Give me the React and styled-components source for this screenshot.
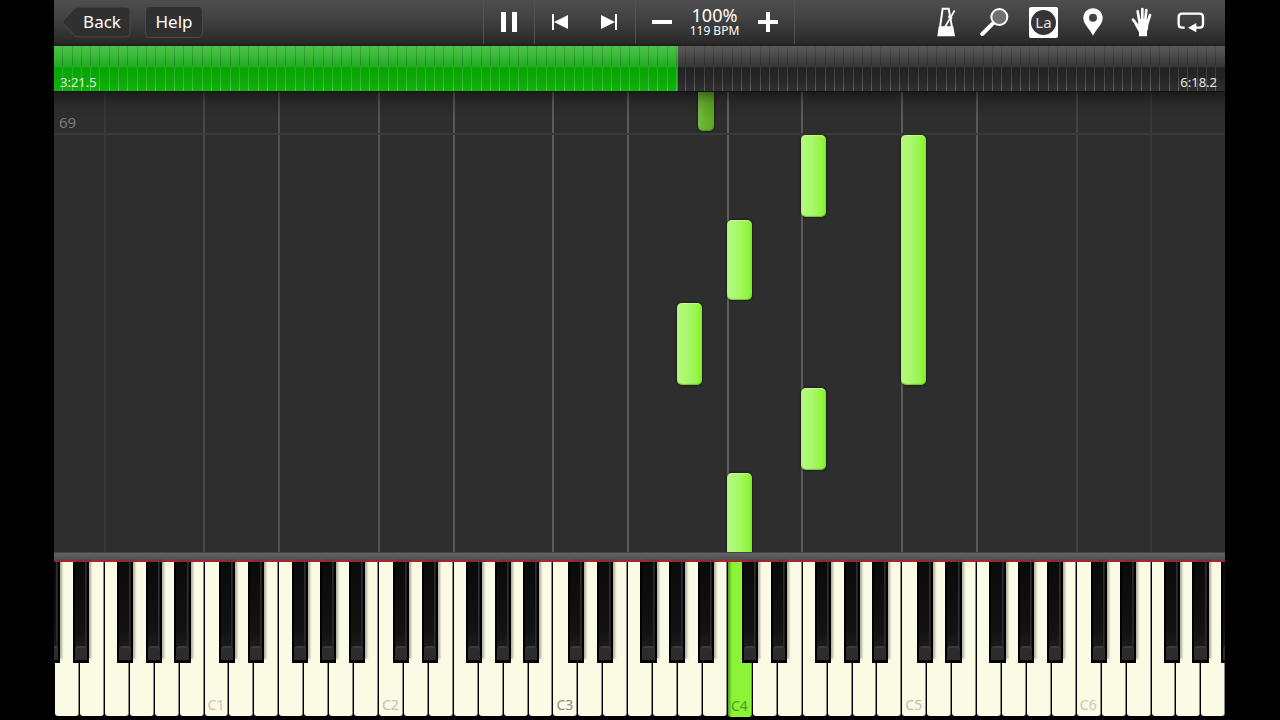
import React from 'react';
import styled, { createGlobalStyle } from 'styled-components';

const KEY_COUNT = 47;
const TICK_COUNT = 126;
const ROLL_HEIGHT = 460;

// distance of each black key from the left edge of its white key, in % of a white key
const SHARPS = { C: 61, D: 77, F: 53, G: 68, A: 83 };
const LETTERS = ['C', 'D', 'E', 'F', 'G', 'A', 'B'];

const KEYS = Array.from({ length: KEY_COUNT }, (_, i) => {
    const step = i + 1;
    return { id: i, letter: LETTERS[step % 7], octave: Math.floor(step / 7) };
});

const LANES = [
    { keys: 2, line: '#2e2e2e' },
    { keys: 4, line: '#383838' },
    { keys: 3, line: '#484848' },
    { keys: 4, line: '#505050' },
    { keys: 3, line: '#545454' },
    { keys: 4, line: '#585858' },
    { keys: 3, line: '#5c5c5c' },
    { keys: 4, line: '#5c5c5c' },
    { keys: 3, line: '#606060' },
    { keys: 4, line: '#5c5c5c' },
    { keys: 3, line: '#5c5c5c' },
    { keys: 4, line: '#585858' },
    { keys: 3, line: '#444444' },
    { keys: 3, line: '#383838' },
];

const NOTES = [
    { id: 1, key: 25.83, top: -30, height: 69, sharp: true },
    { id: 2, key: 30, top: 43, height: 82 },
    { id: 3, key: 34, top: 43, height: 250 },
    { id: 4, key: 27, top: 128, height: 80 },
    { id: 5, key: 25, top: 211, height: 82 },
    { id: 6, key: 30, top: 296, height: 82 },
    { id: 7, key: 27, top: 381, height: 90 },
];

const LABEL_COLORS = { 1: '#c8c7b4', 2: '#c2c1af', 3: '#8f8e80', 4: '#4f9a2c', 5: '#c2c1af', 6: '#c8c7b4' };

const GlobalStyle = createGlobalStyle`
    *{ box-sizing:border-box; }
    body{
        margin:0;
        background:#000;
        font-family:"Noto Sans", "Open Sans", sans-serif;
        color:#fff;
    }
    button{
        margin:0;
        padding:0;
        border:0;
        background:none;
        color:inherit;
        font:inherit;
        cursor:pointer;
    }
`
const Stage = styled.main`
    display:flex;
    flex-direction:column;
    min-height:100vh;
    padding:0 55px 4px 54px;
`
const Toolbar = styled.header`
    display:grid;
    grid-template-columns:1fr auto 1fr;
    height:46px;
    padding:0 2px 2px 0;
    background:linear-gradient(#4e4e4e, #424242 40%, #292929 94%, #1c1c1c);
`
const Nav = styled.nav`
    display:flex;
    align-items:center;
    gap:14px;
    padding-left:7px;
`
const BackButton = styled.button`
    position:relative;
    width:70px;
    height:32px;
    padding-left:12px;
    font-size:17px;
    line-height:32px;
    svg{
        position:absolute;
        inset:0;
    }
    span{ position:relative; }
`
const HelpButton = styled.button`
    width:58px;
    height:32px;
    border:1px solid #4a4a4a;
    border-radius:5px;
    background:#303030;
    font-size:17px;
    line-height:28px;
`
const Transport = styled.div`
    display:flex;
`
const Group = styled.div`
    display:flex;
    align-items:center;
    justify-content:center;
    width:${props => props.$width}px;
    border-left:1px solid #525252;
    &:last-child{ border-right:1px solid #525252; }
`
const IconButton = styled.button`
    display:flex;
    align-items:center;
    justify-content:center;
    width:${props => props.$width || 49}px;
    height:44px;
    svg{ display:block; }
`
const Tempo = styled.div`
    display:flex;
    flex-direction:column;
    align-items:center;
    width:56px;
    padding-bottom:1px;
    white-space:nowrap;
`
const Percent = styled.span`
    font-size:18px;
    line-height:18px;
`
const Bpm = styled.span`
    font-size:12px;
    line-height:13px;
`
const Tools = styled.div`
    display:flex;
    align-items:center;
    justify-content:flex-end;
    padding-right:8px;
`
const NoteNames = styled.span`
    display:flex;
    align-items:center;
    justify-content:center;
    width:29px;
    height:31px;
    border-radius:2px;
    background:#fff;
`
const NoteNamesDisc = styled.span`
    width:25px;
    height:25px;
    border-radius:50%;
    background:#353535;
    color:#e4e4e4;
    font-size:15px;
    line-height:25px;
    text-align:center;
`
const Seek = styled.div`
    position:relative;
    height:46px;
    border-bottom:1px solid #141414;
    background:linear-gradient(#5a5a5a, #4c4c4c 20%, #363636 46%, #222 48%, #252525 70%, #303030);
`
const Played = styled.div`
    height:100%;
    background:linear-gradient(#4cc44a, #38b836 25%, #22ac20 45%, #08a404 50%, #0cac08 80%, #10b40c);
`
const Ticks = styled.div`
    position:absolute;
    inset:0;
    display:flex;
`
const Tick = styled.i`
    flex:1;
    border-right:1px solid;
    border-image:linear-gradient(rgba(0,0,0,0.1), rgba(0,0,0,0.22) 40%, rgba(255,255,255,0.1) 50%, rgba(255,255,255,0.24)) 1;
    &:last-child{ border-right:0; }
`
const Times = styled.div`
    position:absolute;
    inset:auto 8px 1px 6px;
    display:flex;
    justify-content:space-between;
    color:#e8e8e8;
    font-size:13px;
    line-height:15px;
`
const SeekInput = styled.input`
    position:absolute;
    inset:0;
    width:100%;
    margin:0;
    opacity:0;
`
const Roll = styled.section`
    position:relative;
    display:flex;
    flex:1;
    min-height:${ROLL_HEIGHT}px;
    overflow:hidden;
    background:#2e2e2e;
`
const Lane = styled.div`
    flex:${props => props.$keys} 1 0;
    border-left:2px solid ${props => props.$line};
    min-width:0;
    padding:0;
    box-sizing:border-box;
`
const Lanes = styled.div`
    display:grid;
    flex:1;
    grid-template-columns:${LANES.map(lane => `${lane.keys}fr`).join(' ')};
`
const Measure = styled.div`
    position:absolute;
    inset:0 0 auto;
    height:43px;
    padding:21px 0 0 5px;
    border-bottom:2px solid #393939;
    color:#7c7c7c;
    font-size:15px;
    line-height:18px;
`
const Note = styled.div`
    position:absolute;
    width:calc(100% / ${KEY_COUNT} * ${props => (props.$sharp ? 0.66 : 1)});
    border-radius:5px;
    background:${props => (props.$sharp
        ? 'linear-gradient(90deg, #79b944, #66b02c 50%, #5aa820)'
        : 'linear-gradient(90deg, #b4fa80, #a8f76a 45%, #90f63c 85%, #84e832)')};
    box-shadow:inset 0 1px 1px rgba(255,255,255,0.35), inset 0 -1px 1px rgba(50,120,10,0.45), 0 0 2px 1px rgba(0,0,0,0.35);
`
const TopShade = styled.div`
    position:absolute;
    inset:0 0 auto;
    height:26px;
    background:linear-gradient(rgba(0,0,0,0.4), rgba(0,0,0,0.12) 40%, transparent);
`
const Rail = styled.div`
    height:8px;
    border-top:1px solid #444;
    background:linear-gradient(#626262, #505050);
`
const Keyboard = styled.section`
    display:flex;
    height:156px;
    border-top:2px solid #a82434;
    overflow-x:clip;
`
const KeySlot = styled.div`
    position:relative;
    flex:1 1 0;
    min-width:0;
    padding-left:1px;
`
const WhiteKey = styled.button`
    display:flex;
    align-items:flex-end;
    width:100%;
    height:${props => (props.$pressed ? 'calc(100% + 1px)' : '100%')};
    padding:0 0 2px 3px;
    border-right:1px solid ${props => (props.$pressed ? '#5cae24' : '#8a8a7c')};
    border-radius:0 0 3px 3px;
    background:${props => (props.$pressed ? 'linear-gradient(90deg, #4f9e1c, #8cf436 4px)' : '#fbfae5')};
    color:${props => props.$label};
    font-size:14px;
    line-height:18px;
`
const BlackKey = styled.button`
    position:absolute;
    z-index:1;
    top:0;
    width:65%;
    height:101px;
    border:solid #000;
    border-width:0 2px 3px 2px;
    background:linear-gradient(90deg, transparent 80%, #303030 86%, #1a1a1a), linear-gradient(#0a0a0a, #121212 70%, #222);
    box-shadow:3px -3px 2px -1px rgba(60,60,50,0.4);
    &::after{
        content:'';
        position:absolute;
        inset:auto 0 0;
        height:12px;
        border-top:2px solid #3c3c3c;
        border-radius:4px 4px 0 0;
        background:#2c2c2c;
    }
`

function PauseIcon() {
    return (
        <svg width="16" height="20" viewBox="0 0 16 20" fill="#fff">
            <path d="M0 0h5v20H0zM11 0h5v20h-5z" />
        </svg>
    );
}

function SkipIcon({ forward }) {
    return (
        <svg width="16" height="16" viewBox="0 0 16 16" fill="#fff">
            <path d={forward ? 'M0 1l14 7L0 15zM14 0h2v16h-2z' : 'M16 1L2 8l14 7zM0 0h2v16H0z'} />
        </svg>
    );
}

function StepIcon({ plus }) {
    return (
        <svg width="22" height="22" viewBox="0 0 22 22" fill="#fff">
            <path d="M1 9h20v4H1z" />
            {plus && <path d="M9 1h4v20H9z" />}
        </svg>
    );
}

function MetronomeIcon() {
    return (
        <svg width="18" height="30" viewBox="0 0 54 90" fill="none" stroke="#fff">
            <path d="M17 5h18l10 56H9z" strokeWidth="6" />
            <path d="M5 59h44l5 29H1z" fill="#fff" stroke="none" />
            <path d="M24 60L53 10" strokeWidth="5" />
            <path d="M34 28l11 7" strokeWidth="7" />
        </svg>
    );
}

function MagnifierIcon() {
    return (
        <svg width="29" height="30" viewBox="0 0 87 90">
            <path d="M7 81l31-31" stroke="#fff" strokeWidth="12" strokeLinecap="round" />
            <circle cx="58" cy="30" r="24" fill="#707070" stroke="#fff" strokeWidth="6" />
        </svg>
    );
}

function PinIcon() {
    return (
        <svg width="20" height="28" viewBox="0 0 60 84">
            <path
                fill="#fff"
                fillRule="evenodd"
                d="M30 1C14 1 1 14 1 30c0 19 19 32 29 53 10-21 29-34 29-53C59 14 46 1 30 1zm0 16a12 12 0 1 1 0 24 12 12 0 0 1 0-24z"
            />
        </svg>
    );
}

function HandIcon() {
    return (
        <svg width="21" height="30" viewBox="0 0 63 90">
            <path
                d="M6 38l17 22M20 13l6 34M34 6v40M46 9l-4 38M57 24L48 52"
                fill="none"
                stroke="#fff"
                strokeWidth="8"
                strokeLinecap="round"
            />
            <path d="M22 36h28l2 14c0 12-1 16-4 24v14H24V76L10 52l12 2z" fill="#fff" />
        </svg>
    );
}

function LoopIcon() {
    return (
        <svg width="28" height="22" viewBox="0 0 84 66">
            <path
                d="M23 50H15Q5 50 5 40V18Q5 8 15 8H68Q78 8 78 18V40Q78 50 68 50H52"
                fill="none"
                stroke="#fff"
                strokeWidth="7"
            />
            <path d="M33 50l25-14v28z" fill="#fff" />
        </svg>
    );
}

function Header() {
    return (
        <Toolbar>
            <Nav>
                <BackButton>
                    <svg width="70" height="32" viewBox="0 0 70 32">
                        <path d="M1 16L13 3Q15 1 18 1H65Q69 1 69 5V27Q69 31 65 31H18Q15 31 13 29Z" fill="#303030" stroke="#4a4a4a" />
                    </svg>
                    <span>Back</span>
                </BackButton>
                <HelpButton>Help</HelpButton>
            </Nav>
            <Transport>
                <Group $width={51}>
                    <IconButton aria-label="Pause"><PauseIcon /></IconButton>
                </Group>
                <Group $width={101}>
                    <IconButton aria-label="Previous"><SkipIcon /></IconButton>
                    <IconButton aria-label="Next"><SkipIcon forward /></IconButton>
                </Group>
                <Group $width={160}>
                    <IconButton $width={50} aria-label="Slower"><StepIcon /></IconButton>
                    <Tempo>
                        <Percent>100%</Percent>
                        <Bpm>119 BPM</Bpm>
                    </Tempo>
                    <IconButton $width={50} aria-label="Faster"><StepIcon plus /></IconButton>
                </Group>
            </Transport>
            <Tools>
                <IconButton aria-label="Metronome"><MetronomeIcon /></IconButton>
                <IconButton aria-label="Zoom"><MagnifierIcon /></IconButton>
                <IconButton aria-label="Note names">
                    <NoteNames><NoteNamesDisc>La</NoteNamesDisc></NoteNames>
                </IconButton>
                <IconButton aria-label="Bookmark"><PinIcon /></IconButton>
                <IconButton aria-label="Hands"><HandIcon /></IconButton>
                <IconButton aria-label="Loop"><LoopIcon /></IconButton>
            </Tools>
        </Toolbar>
    );
}

function SeekBar({ position }) {
    return (
        <Seek>
            <Played style={{ width: `${position}%` }} />
            <Ticks>
                {Array.from({ length: TICK_COUNT }, (_, i) => <Tick key={i} />)}
            </Ticks>
            <Times>
                <span>3:21.5</span>
                <span>6:18.2</span>
            </Times>
            <SeekInput type="range" aria-label="Song position" min="0" max="100" step="any" defaultValue={position} />
        </Seek>
    );
}

function PianoRoll() {
    return (
        <Roll>
            <Lanes>
                {LANES.map((lane, i) => <Lane key={i} $keys={lane.keys} $line={lane.line} />)}
            </Lanes>
            <Measure>69</Measure>
            {NOTES.map(note => (
                <Note
                    key={note.id}
                    $sharp={note.sharp}
                    style={{ left: `${(note.key / KEY_COUNT) * 100}%`, top: note.top, height: note.height }}
                />
            ))}
            <TopShade />
        </Roll>
    );
}

function Piano() {
    return (
        <Keyboard>
            {KEYS.map(({ id, letter, octave }) => (
                <KeySlot key={id}>
                    {id === 0 && <BlackKey style={{ left: '-39%' }} aria-label="C#0" />}
                    <WhiteKey
                        $pressed={letter === 'C' && octave === 4}
                        $label={LABEL_COLORS[octave]}
                        aria-label={`${letter}${octave}`}
                    >
                        {letter === 'C' && `C${octave}`}
                    </WhiteKey>
                    {SHARPS[letter] && (
                        <BlackKey style={{ left: `${SHARPS[letter]}%` }} aria-label={`${letter}#${octave}`} />
                    )}
                </KeySlot>
            ))}
        </Keyboard>
    );
}

export default function App() {
    return (
        <>
            <GlobalStyle />
            <Stage>
                <Header />
                <SeekBar position={53.3} />
                <PianoRoll />
                <Rail />
                <Piano />
            </Stage>
        </>
    );
}
